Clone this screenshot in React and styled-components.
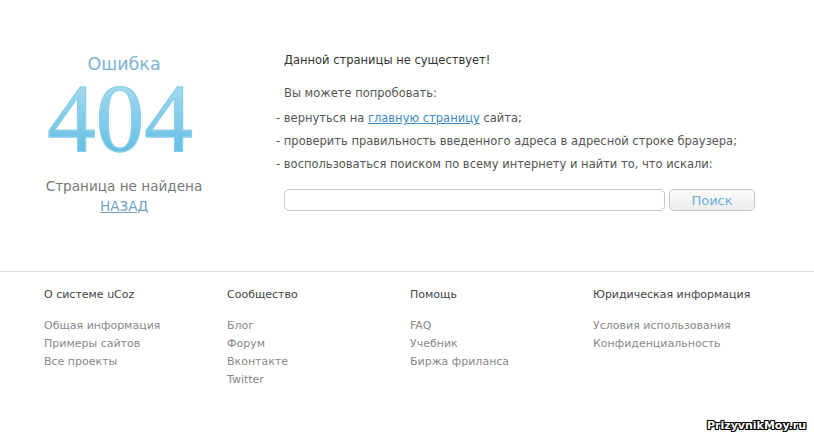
import styled, { createGlobalStyle } from "styled-components"

const GlobalStyle = createGlobalStyle`
    body {
        margin: 0;
        background: #ffffff;
        font-family: 'DejaVu Sans', Verdana, sans-serif;
    }
`

const footerColumns = [
    { title: "О системе uCoz", links: ["Общая информация", "Примеры сайтов", "Все проекты"] },
    { title: "Сообщество", links: ["Блог", "Форум", "Вконтакте", "Twitter"] },
    { title: "Помощь", links: ["FAQ", "Учебник", "Биржа фриланса"] },
    { title: "Юридическая информация", links: ["Условия использования", "Конфиденциальность"] }
]

export default function App() {
    const tips = [
        <>вернуться на <TextLink href="#">главную страницу</TextLink> сайта;</>,
        "проверить правильность введенного адреса в адресной строке браузера;",
        "воспользоваться поиском по всему интернету и найти то, что искали:"
    ]

    return (
        <Page>
            <GlobalStyle />
            <Main>
                <ErrorBox>
                    <ErrorTitle>Ошибка</ErrorTitle>
                    <BigCode>404</BigCode>
                    <NotFound>Страница не найдена</NotFound>
                    <BackLink href="#">НАЗАД</BackLink>
                </ErrorBox>
                <Info>
                    <Lead>Данной страницы не существует!</Lead>
                    <Try>Вы можете попробовать:</Try>
                    <TipList>
                        {tips.map((tip, i) => <Tip key={i}>{tip}</Tip>)}
                    </TipList>
                    <SearchRow>
                        <SearchInput type="text" />
                        <SearchButton>Поиск</SearchButton>
                    </SearchRow>
                </Info>
            </Main>
            <Footer>
                {footerColumns.map(col => (
                    <FooterCol key={col.title}>
                        <FooterTitle>{col.title}</FooterTitle>
                        {col.links.map(link => <FooterLink key={link} href="#">{link}</FooterLink>)}
                    </FooterCol>
                ))}
            </Footer>
            <Watermark>PrizyvnikMoy.ru</Watermark>
        </Page>
    )
}

const Page = styled.div`
    position: relative;
    width: 814px;
    height: 435px;
    overflow: hidden;
`

const Main = styled.div`
    display: flex;
    padding-top: 51px;
    height: 220px;
    box-sizing: border-box;
`

const ErrorBox = styled.div`
    width: 248px;
    display: flex;
    flex-direction: column;
    align-items: center;
`

const ErrorTitle = styled.div`
    font-size: 17.5px;
    line-height: 24px;
    margin-top: 1px;
    color: #7eb2d4;
`

const BigCode = styled.div`
    font-family: 'Liberation Serif', 'Times New Roman', serif;
    font-size: 97px;
    line-height: 80px;
    margin: 3px 8px 0 0;
    background: linear-gradient(180deg, #abdbf0 0%, #86cdeb 45%, #5fbce0 100%);
    -webkit-background-clip: text;
    background-clip: text;
    color: transparent;
    -webkit-text-stroke: 1px #8ccfec;
`

const NotFound = styled.div`
    margin-top: 17px;
    font-size: 13.6px;
    line-height: 20px;
    color: #777777;
`

const BackLink = styled.a`
    font-size: 13.6px;
    line-height: 20px;
    color: #6fa3c7;
    text-decoration: underline;
`

const Info = styled.div`
    padding-left: 36px;
    font-size: 11.5px;
    color: #555555;
`

const Lead = styled.div`
    line-height: 18px;
    color: #333333;
`

const Try = styled.div`
    margin-top: 15px;
    line-height: 18px;
`

const TipList = styled.ul`
    list-style: none;
    margin: 5px 0 0 0;
    padding: 0;
`

const Tip = styled.li`
    line-height: 23px;
    &::before {
        content: "- ";
        margin-left: -8px;
    }
`

const TextLink = styled.a`
    color: #3b8ac1;
    text-decoration: underline;
`

const SearchRow = styled.div`
    display: flex;
    gap: 4px;
    margin-top: 13px;
`

const SearchInput = styled.input`
    width: 381px;
    height: 22px;
    box-sizing: border-box;
    border: 1px solid #c8c8c8;
    border-radius: 5px;
    outline: none;
`

const SearchButton = styled.button`
    width: 86px;
    height: 22px;
    box-sizing: border-box;
    border: 1px solid #c8c8c8;
    border-radius: 5px;
    background: linear-gradient(180deg, #fbfbfb 0%, #ececec 100%);
    color: #6aafd8;
    font-family: 'DejaVu Sans', Verdana, sans-serif;
    font-size: 13px;
    padding: 0;
`

const Footer = styled.div`
    border-top: 1px solid #dddddd;
    margin-top: 51px;
    padding: 16px 0 0 44px;
    display: flex;
`

const FooterCol = styled.div`
    width: 183px;
    display: flex;
    flex-direction: column;
`

const FooterTitle = styled.div`
    font-size: 11px;
    line-height: 14px;
    color: #444444;
    margin-bottom: 15px;
`

const FooterLink = styled.a`
    font-size: 11px;
    line-height: 18px;
    color: #888888;
    text-decoration: none;
`

const Watermark = styled.div`
    position: absolute;
    right: 8px;
    bottom: 3px;
    font-family: 'DejaVu Sans', Verdana, sans-serif;
    font-weight: bold;
    font-size: 11px;
    color: #ffffff;
    text-shadow: 1px 0 0 #000, -1px 0 0 #000, 0 1px 0 #000, 0 -1px 0 #000,
        1px 1px 0 #000, -1px -1px 0 #000, 1px -1px 0 #000, -1px 1px 0 #000;
`
